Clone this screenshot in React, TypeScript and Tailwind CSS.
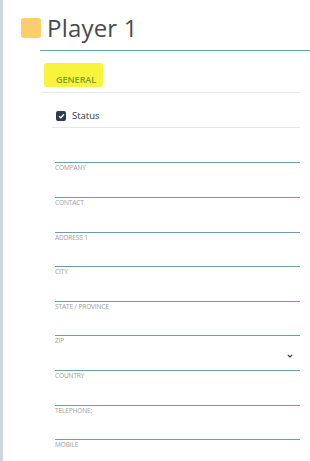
import React from "react";

const fields: { label: string; h: string; chevron?: boolean }[] = [
  { label: "COMPANY", h: "h-[35px]" },
  { label: "CONTACT", h: "h-[35px]" },
  { label: "ADDRESS 1", h: "h-[34px]" },
  { label: "CITY", h: "h-[35px]" },
  { label: "STATE / PROVINCE", h: "h-[34px]" },
  { label: "ZIP", h: "h-[35px]", chevron: true },
  { label: "COUNTRY", h: "h-[35px]" },
  { label: "TELEPHONE:", h: "h-[34px]" },
  { label: "MOBILE", h: "h-[22px]" },
];

export default function App() {
  return (
    <div
      className="w-[310px] h-[461px] bg-white flex overflow-hidden"
      style={{ fontFamily: '"Open Sans", "Liberation Sans", sans-serif' }}
    >
      <div className="w-[3px] h-full bg-[#ccd8de] shrink-0" />
      <div className="flex-1 flex flex-col">
        {/* Header */}
        <div className="pt-[18px] pl-[18px] flex items-center gap-[6px] h-[38px]">
          <div className="w-[20px] h-[20px] rounded-[3px] bg-[#fbcd6b] shrink-0" />
          <div className="text-[24px] leading-[28px] text-[#4a4a4a] -mt-[1px] tracking-[0.2px]">
            Player 1
          </div>
        </div>
        <div className="mt-[12px] ml-[37px] h-[1px] bg-[#6e9e9d]" />
        <div className="ml-[37px] h-[3px] bg-[#f3fafa]" />

        {/* GENERAL */}
        <div className="mt-[9px] ml-[41px] w-[59px] h-[24px] bg-[#f8f43c] rounded-[3px] flex items-center pl-[12px] pt-[8px]">
          <span className="text-[9px] font-semibold text-[#7d9a2c] leading-none">GENERAL</span>
        </div>
        <div className="mt-[5px] ml-[39px] w-[258px] h-[1px] bg-[#e8e8e8]" />

        {/* Status */}
        <div className="ml-[53px] pt-[18px] pb-[6px] flex items-center gap-[6px]">
          <div className="w-[10px] h-[10px] rounded-[2px] bg-[#2f3b4e] flex items-center justify-center">
            <svg width="7" height="6" viewBox="0 0 7 6">
              <path d="M1 3.2 L2.8 4.8 L6 1.3" stroke="white" strokeWidth="1.3" fill="none" />
            </svg>
          </div>
          <span className="text-[9.5px] leading-[10px] text-[#333]">Status</span>
        </div>
        <div className="ml-[49px] w-[248px] h-[1px] bg-[#e8e8e8]" />

        {/* Fields */}
        <div className="mt-[34px] flex flex-col">
          {fields.map((f) => (
            <div key={f.label} className={`${f.h} relative ml-[52px] w-[245px]`}>
              <div className="h-[1px] bg-[#6f9bab]" />
              <div className="mt-[1px] text-[6.5px] leading-[8px] text-[#9c9c9c] tracking-[-0.1px]">
                {f.label}
              </div>
              {f.chevron && (
                <svg
                  className="absolute right-[7px] top-[19px]"
                  width="6"
                  height="4"
                  viewBox="0 0 6 4"
                >
                  <path d="M0.8 0.8 L3 3 L5.2 0.8" stroke="#333" strokeWidth="1.1" fill="none" />
                </svg>
              )}
            </div>
          ))}
        </div>
      </div>
    </div>
  );
}
